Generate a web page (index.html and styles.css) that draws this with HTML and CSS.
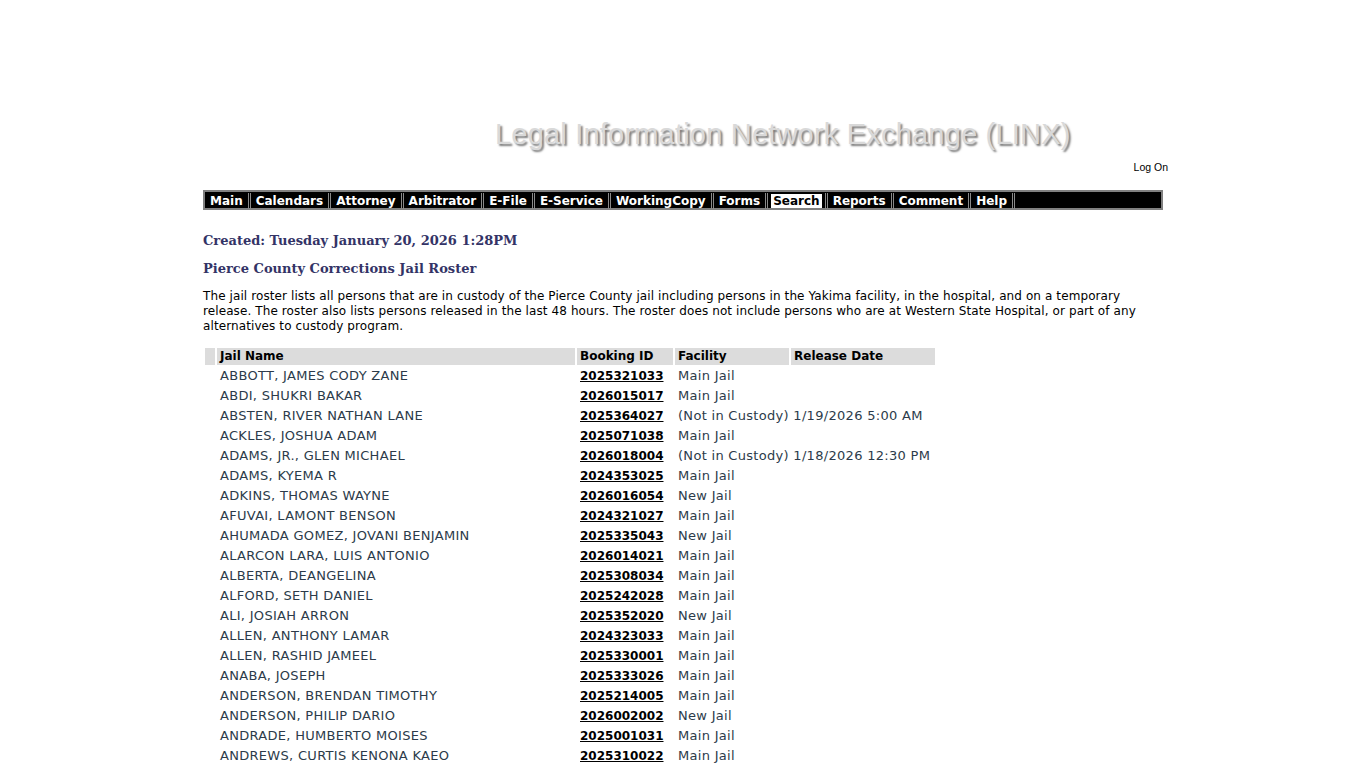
FILE: index.html
```html
<!DOCTYPE html>
<html lang="en">
<head>
    <meta charset="UTF-8">
    <title>LINX - Pierce County Corrections Jail Roster</title>
    <link rel="stylesheet" href="styles.css">
</head>
<body>
<div class="page">
    <div class="header">
        <div class="site-title">Legal Information Network Exchange (LINX)</div>
        <div class="logon"><a href="#">Log On</a></div>
    </div>

    <div class="menu">
        <span class="menu-item"><a href="#">Main</a></span><span class="menu-item"><a href="#">Calendars</a></span><span class="menu-item"><a href="#">Attorney</a></span><span class="menu-item"><a href="#">Arbitrator</a></span><span class="menu-item"><a href="#">E-File</a></span><span class="menu-item"><a href="#">E-Service</a></span><span class="menu-item"><a href="#">WorkingCopy</a></span><span class="menu-item"><a href="#">Forms</a></span><span class="menu-item"><a href="#" class="active">Search</a></span><span class="menu-item"><a href="#">Reports</a></span><span class="menu-item"><a href="#">Comment</a></span><span class="menu-item"><a href="#">Help</a></span>
    </div>

    <h3 class="created">Created: Tuesday January 20, 2026 1:28PM</h3>
    <h3 class="roster-title">Pierce County Corrections Jail Roster</h3>
    <p class="intro">The jail roster lists all persons that are in custody of the Pierce County jail including persons in the Yakima facility, in the hospital, and on a temporary release. The roster also lists persons released in the last 48 hours. The roster does not include persons who are at Western State Hospital, or part of any alternatives to custody program.</p>

    <table class="roster">
        <tr class="head">
            <td class="c-pad"></td>
            <td class="c-name">Jail Name</td>
            <td class="c-id">Booking ID</td>
            <td class="c-fac">Facility</td>
            <td class="c-rel">Release Date</td>
        </tr>
        <tr><td></td><td>ABBOTT, JAMES CODY ZANE</td><td><a href="#">2025321033</a></td><td>Main Jail</td><td></td></tr>
        <tr><td></td><td>ABDI, SHUKRI BAKAR</td><td><a href="#">2026015017</a></td><td>Main Jail</td><td></td></tr>
        <tr><td></td><td>ABSTEN, RIVER NATHAN LANE</td><td><a href="#">2025364027</a></td><td colspan="2">(Not in Custody) 1/19/2026 5:00 AM</td></tr>
        <tr><td></td><td>ACKLES, JOSHUA ADAM</td><td><a href="#">2025071038</a></td><td>Main Jail</td><td></td></tr>
        <tr><td></td><td>ADAMS, JR., GLEN MICHAEL</td><td><a href="#">2026018004</a></td><td colspan="2">(Not in Custody) 1/18/2026 12:30 PM</td></tr>
        <tr><td></td><td>ADAMS, KYEMA R</td><td><a href="#">2024353025</a></td><td>Main Jail</td><td></td></tr>
        <tr><td></td><td>ADKINS, THOMAS WAYNE</td><td><a href="#">2026016054</a></td><td>New Jail</td><td></td></tr>
        <tr><td></td><td>AFUVAI, LAMONT BENSON</td><td><a href="#">2024321027</a></td><td>Main Jail</td><td></td></tr>
        <tr><td></td><td>AHUMADA GOMEZ, JOVANI BENJAMIN</td><td><a href="#">2025335043</a></td><td>New Jail</td><td></td></tr>
        <tr><td></td><td>ALARCON LARA, LUIS ANTONIO</td><td><a href="#">2026014021</a></td><td>Main Jail</td><td></td></tr>
        <tr><td></td><td>ALBERTA, DEANGELINA</td><td><a href="#">2025308034</a></td><td>Main Jail</td><td></td></tr>
        <tr><td></td><td>ALFORD, SETH DANIEL</td><td><a href="#">2025242028</a></td><td>Main Jail</td><td></td></tr>
        <tr><td></td><td>ALI, JOSIAH ARRON</td><td><a href="#">2025352020</a></td><td>New Jail</td><td></td></tr>
        <tr><td></td><td>ALLEN, ANTHONY LAMAR</td><td><a href="#">2024323033</a></td><td>Main Jail</td><td></td></tr>
        <tr><td></td><td>ALLEN, RASHID JAMEEL</td><td><a href="#">2025330001</a></td><td>Main Jail</td><td></td></tr>
        <tr><td></td><td>ANABA, JOSEPH</td><td><a href="#">2025333026</a></td><td>Main Jail</td><td></td></tr>
        <tr><td></td><td>ANDERSON, BRENDAN TIMOTHY</td><td><a href="#">2025214005</a></td><td>Main Jail</td><td></td></tr>
        <tr><td></td><td>ANDERSON, PHILIP DARIO</td><td><a href="#">2026002002</a></td><td>New Jail</td><td></td></tr>
        <tr><td></td><td>ANDRADE, HUMBERTO MOISES</td><td><a href="#">2025001031</a></td><td>Main Jail</td><td></td></tr>
        <tr><td></td><td>ANDREWS, CURTIS KENONA KAEO</td><td><a href="#">2025310022</a></td><td>Main Jail</td><td></td></tr>
    </table>
</div>
</body>
</html>
```

FILE: styles.css
```css
body {
    margin: 0;
    background: #fff;
    font-family: "DejaVu Sans", Verdana, sans-serif;
    color: #000;
}
.page {
    width: 960px;
    margin: 0 auto;
}

.header {
    padding-top: 114px;
}
.site-title {
    font-family: "Liberation Sans", Arial, sans-serif;
    font-size: 29px;
    letter-spacing: 0.2px;
    line-height: 40px;
    color: #d9d9d9;
    text-shadow: 2px 2px 2px #7a7a7a;
    padding-left: 292px;
}
.logon {
    text-align: right;
    margin-right: -5px;
    font-family: "Liberation Sans", Arial, sans-serif;
    font-size: 10.5px;
    line-height: 14px;
    margin-top: 6px;
}
.logon a {
    color: #000;
    text-decoration: none;
}

.menu {
    margin-top: 16px;
    background: #000;
    border: 2px solid #808080;
    height: 16px;
    line-height: 16px;
    white-space: nowrap;
}
.menu-item {
    display: inline-block;
    padding: 0 3px;
    border-right: 3px double #8a8a8a;
    font-size: 12px;
    font-weight: bold;
}
.menu-item a {
    color: #fff;
    text-decoration: none;
    padding: 0 2px;
}
.menu-item a.active {
    background: #fff;
    color: #000;
}

h3 {
    font-family: "DejaVu Serif", Georgia, serif;
    font-size: 13px;
    font-weight: bold;
    color: #333366;
    margin: 0;
    line-height: 18px;
}
.created {
    margin-top: 22px;
}
.roster-title {
    margin-top: 10px;
}

.intro {
    width: 940px;
    font-size: 12px;
    letter-spacing: 0.1px;
    line-height: 15px;
    margin: 11px 0 0;
}

.roster {
    border-spacing: 2px;
    margin-top: 12px;
    font-size: 13px;
    letter-spacing: 0.3px;
    color: #2c3b4a;
}
.roster td {
    padding: 0 3px;
    height: 18px;
    line-height: 18px;
    white-space: nowrap;
    vertical-align: middle;
}
.roster .head td {
    background: #dcdcdc;
    color: #000;
    font-size: 12px;
    letter-spacing: 0;
    font-weight: bold;
    height: 17px;
    line-height: 17px;
}
.roster .c-pad { width: 4px; }
.roster .c-name { width: 352px; }
.roster .c-id { width: 90px; }
.roster .c-fac { width: 108px; }
.roster .c-rel { width: 138px; }
.roster a {
    color: #000;
    font-size: 12px;
    letter-spacing: 0;
    font-weight: bold;
}
```
